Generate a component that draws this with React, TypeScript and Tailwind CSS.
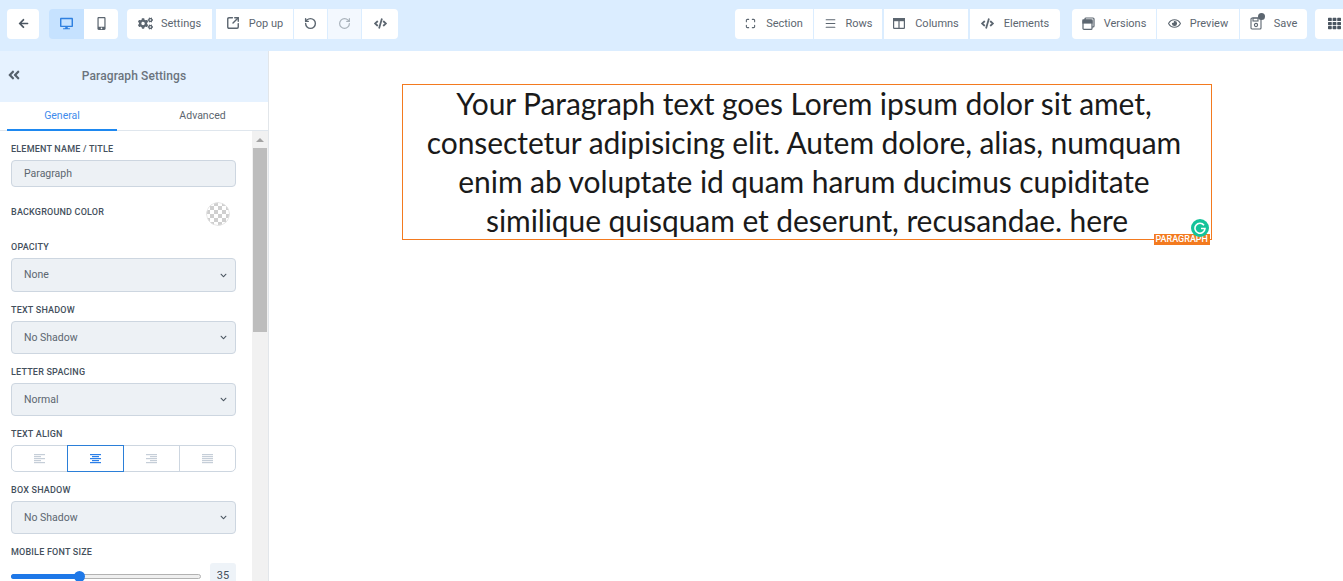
import React from "react";
import { FaArrowLeft, FaDesktop, FaMobileAlt, FaCogs, FaCode, FaRegEye, FaTh, FaAngleDoubleLeft, FaChevronDown } from "react-icons/fa";
import { Maximize, Menu, RotateCcw, RotateCw, SquareArrowOutUpRight } from "lucide-react";

function Btn({ w, icon, label, gap = "gap-[10px]", extra = "" }: { w: string; icon: React.ReactNode; label?: string; gap?: string; extra?: string }) {
  return (
    <div className={`h-[30px] shrink-0 flex items-center justify-center bg-white text-[11px] text-[#5c6670] ${gap} ${w} ${extra}`}>
      <span className="-mt-[2px] flex">{icon}</span>
      {label && <span>{label}</span>}
    </div>
  );
}

function Label({ children, mt = "mt-[12px]" }: { children: React.ReactNode; mt?: string }) {
  return <div className={`${mt} text-[9px] leading-[12px] font-medium tracking-[0.2px] text-[#44505c] uppercase`}>{children}</div>;
}

function Select({ value, h = "h-[33px]", mt = "mt-[5px]" }: { value: string; h?: string; mt?: string }) {
  return (
    <div className={`${mt} ${h} w-[225px] rounded-[4px] border border-[#cdd6e0] bg-[#edf1f5] flex items-center justify-between pl-[12px] pr-[8px] text-[10.5px] text-[#5c6670]`}>
      <span>{value}</span>
      <FaChevronDown className="w-[7px] h-[7px] text-[#4b5661]" />
    </div>
  );
}

function AlignIcon({ kind, color }: { kind: "l" | "c" | "r" | "j"; color: string }) {
  const rows = [11, 7, 11, 7, 11];
  return (
    <svg width="11" height="10" viewBox="0 0 11 10">
      {rows.map((w, i) => {
        const width = kind === "j" ? 11 : w;
        const x = kind === "l" || kind === "j" ? 0 : kind === "r" ? 11 - width : (11 - width) / 2;
        return <rect key={i} x={x} y={i * 2} width={width} height="1.2" fill={color} />;
      })}
    </svg>
  );
}

function Checker() {
  return (
    <svg width="24" height="24" viewBox="0 0 24 24" className="rounded-full">
      <defs>
        <pattern id="ck" width="8" height="8" patternUnits="userSpaceOnUse">
          <rect width="8" height="8" fill="#fff" />
          <rect width="4" height="4" fill="#cfcfcf" />
          <rect x="4" y="4" width="4" height="4" fill="#cfcfcf" />
        </pattern>
      </defs>
      <circle cx="12" cy="12" r="11.5" fill="url(#ck)" stroke="#e4e4e4" />
    </svg>
  );
}

export default function App() {
  const ic = "w-[13px] h-[13px] text-[#5c6670]";
  return (
    <div className="h-[581px] w-[1343px] overflow-hidden bg-white flex flex-col font-['Roboto',sans-serif]">
      <header className="h-[51px] shrink-0 bg-[#dbedff] flex items-start pt-[9px] pl-[7px] overflow-hidden">
        <Btn w="w-[32px] rounded-[4px]" icon={<FaArrowLeft className="w-[11px] h-[11px] text-[#4b5661]" />} />
        <div className="ml-[10px] flex shrink-0">
          <Btn w="w-[35px] !bg-[#c6e2ff] rounded-l-[4px]" icon={<FaDesktop className="w-[13px] h-[13px] text-[#2f80e0]" />} />
          <Btn w="w-[34px] rounded-r-[4px]" icon={<FaMobileAlt className={ic} />} />
        </div>
        <Btn w="w-[85px] ml-[9px] rounded-l-[4px]" gap="gap-[8px]" icon={<FaCogs className="w-[15px] h-[15px] text-[#5c6670]" />} label="Settings" />
        <div className="ml-[4px] flex gap-[1px] shrink-0">
          <Btn w="w-[77px]" gap="gap-[9px]" icon={<SquareArrowOutUpRight className="w-[14px] h-[14px] text-[#5c6670]" strokeWidth={2.4} />} label="Pop up" />
          <Btn w="w-[33px]" icon={<RotateCcw className="w-[13px] h-[13px] text-[#5c6670]" strokeWidth={2.6} />} />
          <Btn w="w-[33px] !bg-[#f3f8fe]" icon={<RotateCw className="w-[13px] h-[13px] text-[#a9b2bb]" strokeWidth={2.2} />} />
          <Btn w="w-[36px] rounded-r-[4px]" icon={<FaCode className={ic} />} />
        </div>
        <div className="ml-[337px] flex gap-[1px] shrink-0">
          <Btn w="w-[78px] rounded-l-[4px]" icon={<Maximize className="w-[11px] h-[11px] text-[#5c6670]" strokeWidth={2.4} />} label="Section" />
          <Btn w="w-[68px]" gap="gap-[9px]" icon={<Menu className="w-[13px] h-[13px] text-[#5c6670]" />} label="Rows" />
          <Btn
            w="w-[84px] ml-[1px]"
            icon={
              <svg width="12" height="11" viewBox="0 0 12 11" fill="none" stroke="#5c6670" strokeWidth="1.2">
                <rect x="0.6" y="0.6" width="10.8" height="9.8" rx="0.6" />
                <rect x="0.6" y="0.6" width="10.8" height="2" fill="#5c6670" />
                <path d="M6 2v8" />
              </svg>
            }
            label="Columns"
          />
          <Btn w="w-[90px] ml-[1px] rounded-r-[4px]" icon={<FaCode className={ic} />} label="Elements" />
        </div>
        <div className="ml-[12px] flex gap-[1px] shrink-0">
          <Btn
            w="w-[84px] rounded-l-[4px]"
            gap="gap-[9px]"
            icon={
              <svg width="13" height="13" viewBox="0 0 13 13" fill="none" stroke="#5c6670" strokeWidth="1.2">
                <rect x="3" y="1" width="9" height="9" rx="1" fill="#fff" />
                <rect x="1" y="3" width="9" height="9.4" rx="1" fill="#fff" />
                <rect x="1" y="3" width="9" height="3" fill="#5c6670" />
              </svg>
            }
            label="Versions"
          />
          <Btn w="w-[82px]" gap="gap-[9px]" icon={<FaRegEye className={ic} />} label="Preview" />
          <div className="relative shrink-0">
            <Btn
              w="w-[67px] rounded-r-[4px]"
              gap="gap-[12px]"
              icon={
                <svg width="12" height="13" viewBox="0 0 12 13" fill="none" stroke="#5c6670" strokeWidth="1.1">
                  <rect x="1" y="1" width="10" height="11" rx="1" />
                  <rect x="3" y="1" width="5" height="3" />
                  <circle cx="6" cy="8" r="1.6" />
                </svg>
              }
              label="Save"
            />
            <span className="absolute left-[18px] top-[4px] w-[7px] h-[7px] rounded-full bg-[#5c6670]" />
          </div>
        </div>
        <div className="ml-[8px] w-[40px] shrink-0">
          <Btn w="w-[40px] rounded-l-[4px] !justify-start pl-[13px]" icon={<FaTh className="w-[13px] h-[13px] text-[#4b5661]" />} />
        </div>
      </header>

      <div className="flex-1 flex min-h-0">
        <aside className="w-[269px] shrink-0 border-r border-[#e2e6ea] flex flex-col min-h-0">
          <div className="h-[51px] shrink-0 bg-[#e6f2ff] flex items-center justify-center relative pb-[2px]">
            <FaAngleDoubleLeft className="absolute left-[7px] top-[17px] w-[14px] h-[14px] text-[#56616c]" />
            <span className="text-[12px] font-medium text-[#6b747d] tracking-[0.1px]">Paragraph Settings</span>
          </div>
          <div className="h-[29px] shrink-0 flex border-b border-[#dfe6ed] text-[10.5px] relative">
            <div className="w-[110px] ml-[7px] border-b-2 h-[29px] border-[#1e88f0] text-[#3f8cec] flex items-center justify-center">General</div>
            <div className="w-[151px] pl-[20px] text-[#5c6670] flex items-center justify-center">Advanced</div>
          </div>
          <div className="flex-1 min-h-0 flex overflow-hidden">
            <div className="w-[252px] shrink-0 pl-[11px] overflow-hidden">
              <Label>Element Name / Title</Label>
              <div className="mt-[5px] h-[27px] w-[225px] rounded-[4px] border border-[#cdd6e0] bg-[#edf1f5] flex items-center pl-[12px] text-[10.5px] text-[#5c6670]">Paragraph</div>
              <div className="mt-[15px] w-[225px] h-[24px] flex items-center justify-between pr-[6px]">
                <div className="-mt-[4px]"><Label mt="mt-0">Background Color</Label></div>
                <Checker />
              </div>
              <Label mt="mt-[15px]">Opacity</Label>
              <Select value="None" h="h-[34px]" />
              <Label>Text Shadow</Label>
              <Select value="No Shadow" />
              <Label>Letter Spacing</Label>
              <Select value="Normal" />
              <Label>Text Align</Label>
              <div className="mt-[5px] h-[27px] w-[225px] flex rounded-[5px] border border-[#cdd6e0]">
                <div className="w-[55px] flex items-center justify-center"><AlignIcon kind="l" color="#c5ced8" /></div>
                <div className="w-[57px] -my-[1px] border border-[#2b7fd8] flex items-center justify-center"><AlignIcon kind="c" color="#2b7fe8" /></div>
                <div className="w-[56px] flex items-center justify-center border-r border-[#cdd6e0]"><AlignIcon kind="r" color="#c5ced8" /></div>
                <div className="flex-1 flex items-center justify-center"><AlignIcon kind="j" color="#c5ced8" /></div>
              </div>
              <Label>Box Shadow</Label>
              <Select value="No Shadow" />
              <Label>Mobile Font Size</Label>
              <div className="mt-[5px] flex items-center w-[225px] h-[26px] relative">
                <div className="relative w-[190px] h-[5px] rounded-full bg-[#efefef] border border-[#b2b2b2]">
                  <div className="absolute -left-[1px] -top-[1px] h-[5px] w-[68px] rounded-full bg-[#1e78e8]" />
                  <div className="absolute left-[62px] -top-[4px] w-[11px] h-[11px] rounded-full bg-[#1e78e8]" />
                </div>
                <div className="ml-auto w-[26px] h-[26px] rounded-[3px] bg-[#eef3f8] flex items-center justify-center text-[11px] text-[#44505c]">35</div>
              </div>
            </div>
            <div className="w-[16px] shrink-0 bg-[#f1f1f1] flex flex-col items-center">
              <div className="h-[17px] flex items-center justify-center">
                <div className="w-0 h-0 border-l-[4px] border-r-[4px] border-b-[4px] border-l-transparent border-r-transparent border-b-[#a3a3a3]" />
              </div>
              <div className="w-[14px] h-[184px] bg-[#bdbdbd]" />
            </div>
          </div>
        </aside>

        <main className="flex-1 min-w-0 bg-white pl-[133px] pt-[33px]">
          <div className="relative w-[810px] h-[156px] border border-[#f37a1f] font-['Lato',sans-serif] text-[30px] tracking-[-0.08px] leading-[39px] text-[#1a1a1a] text-center overflow-visible">
            <div className="-mt-[1px] pr-[6px]">
              Your Paragraph text goes Lorem ipsum dolor sit amet, consectetur adipisicing elit. Autem dolore, alias, numquam enim ab voluptate id quam harum ducimus cupiditate
            </div>
            <div>similique quisquam et deserunt, recusandae. here</div>
            <span className="absolute right-[1px] -bottom-[6px] h-[11px] px-[2px] bg-[#f37a1f] text-white text-[9px] leading-[11px] tracking-normal font-['Roboto',sans-serif] font-medium">PARAGRAPH</span>
            <span className="absolute right-[2px] bottom-[2px] w-[18px] h-[18px] rounded-full bg-[#15c39a] flex items-center justify-center">
              <svg width="12" height="12" viewBox="0 0 12 12" fill="none" stroke="#fff" strokeWidth="1.6">
                <path d="M10 3.2A5 5 0 1 0 11 6.5H7" />
              </svg>
            </span>
          </div>
        </main>
      </div>
    </div>
  );
}
